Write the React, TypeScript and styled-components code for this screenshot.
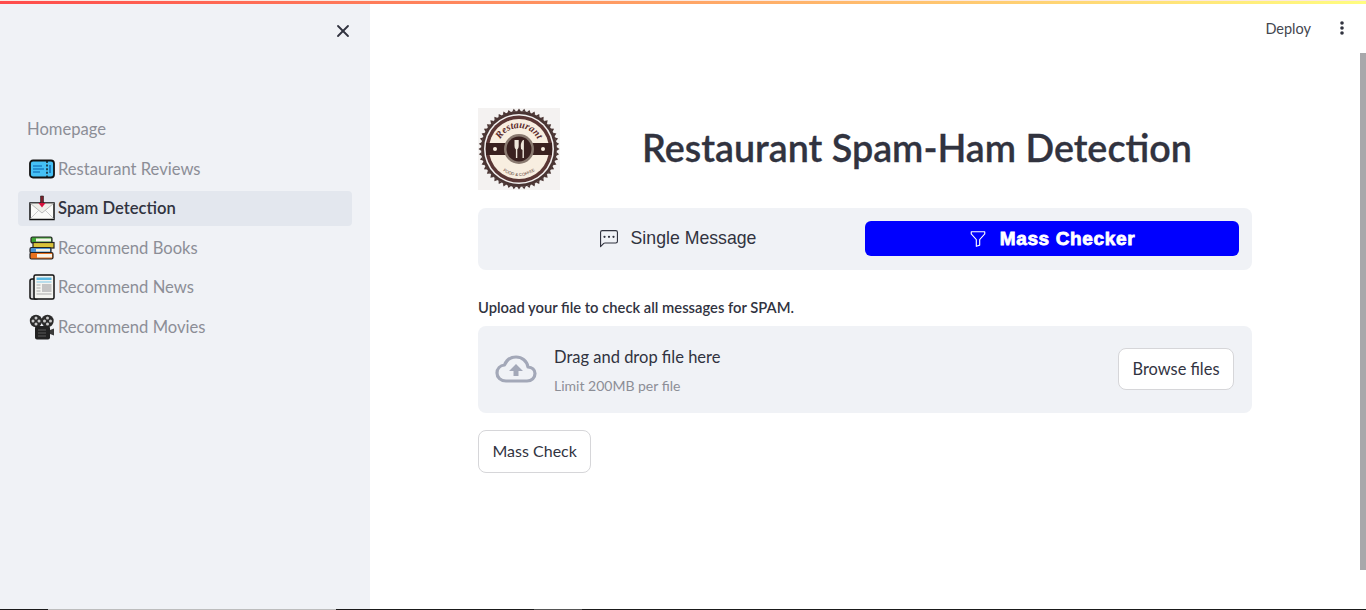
import React from 'react'
import styled, { createGlobalStyle } from 'styled-components'
import { X } from 'lucide-react'
import { BsChatLeftDots, BsFunnel } from 'react-icons/bs'

const sans = `'Lato', 'Noto Sans', sans-serif`

const GlobalStyle = createGlobalStyle`
  html, body {
    margin: 0;
    padding: 0;
    height: 100%;
    overflow: hidden;
    background: #fff;
  }
  * { box-sizing: border-box; }
`

const Page = styled.div`
  width: 1366px;
  height: 610px;
  display: flex;
  flex-direction: column;
  font-family: ${sans};
  color: #31333f;
  overflow: hidden;
`

const Decoration = styled.div`
  height: 4px;
  flex: none;
  border-top: 1px solid #fbe9e2;
  background: linear-gradient(90deg, rgb(255, 75, 75), rgb(255, 253, 128));
`

const Body = styled.div`
  flex: 1;
  min-height: 0;
  display: flex;
`

const Sidebar = styled.aside`
  width: 370px;
  flex: none;
  background: #f0f2f6;
  padding: 0 18px;
`

const CloseRow = styled.div`
  height: 54px;
  display: flex;
  align-items: center;
  justify-content: flex-end;
  margin-right: -1px;
  color: #31333f;
`

const Nav = styled.nav`
  margin-top: 53.5px;
  display: flex;
  flex-direction: column;
  gap: 4.5px;
`

const NavItem = styled.div<{ $active?: boolean; $plain?: boolean }>`
  height: 35px;
  display: flex;
  align-items: center;
  gap: 3px;
  border-radius: 4px;
  padding-left: ${({ $plain }) => ($plain ? '9px' : '11px')};
  font-size: 16.6px;
  font-weight: ${({ $active }) => ($active ? 600 : 400)};
  color: ${({ $active }) => ($active ? '#31333f' : '#8c8e96')};
  background: ${({ $active }) => ($active ? '#e3e7ee' : 'transparent')};
`

const Main = styled.main`
  flex: 1;
  min-width: 0;
  display: flex;
  flex-direction: column;
`

const Header = styled.header`
  height: 48px;
  flex: none;
  display: flex;
  align-items: center;
  justify-content: flex-end;
  gap: 28px;
  padding-right: 15px;
  font-size: 14.5px;
  color: #44464f;
`

const Content = styled.div`
  width: 774px;
  margin-left: 108px;
  padding-top: 56px;
`

const TitleRow = styled.div`
  display: flex;
  align-items: center;
`

const LogoBox = styled.div`
  width: 104px;
  flex: none;
  display: flex;
`

const Title = styled.h1`
  flex: 1;
  margin: 0 0 2px;
  text-align: center;
  font-size: 37.7px;
  line-height: 80px;
  font-weight: 600;
  color: #31333f;
  -webkit-text-stroke: 0.3px #31333f;
`

const TabBar = styled.div`
  margin-top: 18px;
  height: 62px;
  display: grid;
  grid-template-columns: 1fr 1fr;
  align-items: center;
  padding: 0 13px 1px;
  border-radius: 8px;
  background: #f0f2f6;
`

const Tab = styled.div<{ $active?: boolean }>`
  height: 35px;
  display: flex;
  align-items: center;
  justify-content: center;
  gap: 13px;
  border-radius: 6px;
  font-family: 'Liberation Sans', Arial, sans-serif;
  font-size: ${({ $active }) => ($active ? '19px' : '17.7px')};
  font-weight: ${({ $active }) => ($active ? 700 : 400)};
  letter-spacing: ${({ $active }) => ($active ? '0.65px' : '0')};
  -webkit-text-stroke: ${({ $active }) => ($active ? '0.8px #fff' : '0')};
  color: ${({ $active }) => ($active ? '#fff' : '#31333f')};
  background: ${({ $active }) => ($active ? '#0000ff' : 'transparent')};
`

const UploadLabel = styled.div`
  margin-top: 28px;
  font-size: 14.75px;
  line-height: 18px;
  font-weight: 600;
  color: #31333f;
`

const Dropzone = styled.div`
  margin-top: 10px;
  height: 87px;
  display: flex;
  align-items: center;
  gap: 17px;
  padding: 0 18px 2px 17px;
  border-radius: 8px;
  background: #f0f2f6;
`

const DropText = styled.div`
  flex: 1;
  margin-top: 4px;
  display: flex;
  flex-direction: column;
  gap: 10px;
`

const DropTitle = styled.div`
  font-size: 16.5px;
  line-height: 20px;
`

const DropHint = styled.div`
  font-size: 14px;
  line-height: 18px;
  color: #8c8e96;
`

const Button = styled.button`
  height: 42px;
  padding: 0 13.5px;
  background: #fff;
  border: 1px solid #d6d6d9;
  border-radius: 8px;
  font-family: ${sans};
  font-size: 16.4px;
  color: #31333f;
`

const MassButton = styled(Button)`
  display: block;
  margin-top: 17px;
  height: 43px;
  padding-bottom: 2px;
  font-size: 16px;
`

const Scrollbar = styled.div`
  width: 6px;
  flex: none;
  padding-top: 49px;
`

const ScrollThumb = styled.div`
  height: 517px;
  background: #a8a8ab;
`

const BottomLine = styled.div`
  height: 1px;
  flex: none;
  background: linear-gradient(
    90deg,
    #1a1a1a 0 48px,
    #bdbdbd 48px 336px,
    #1a1a1a 336px 534px,
    #555 534px 582px,
    #1a1a1a 582px
  );
`

const TicketIcon = () => (
  <svg width="26" height="20" viewBox="0 0 26 20">
    <rect x="1" y="1.500" width="24" height="17" rx="3" fill="#45c0f5" stroke="#111" strokeWidth="1.800" />
    <path d="M4 7h9M4 10h11M4 13h7" stroke="#1d7fc4" strokeWidth="1.300" />
    <path d="M18 2v16" stroke="#111" strokeWidth="1.400" strokeDasharray="2 1.600" />
    <path d="M21 6v8" stroke="#1d7fc4" strokeWidth="2" />
  </svg>
)

const InboxIcon = () => (
  <svg width="26" height="26" viewBox="0 0 26 26">
    <rect x="1" y="8" width="24" height="16.500" fill="#fbfbf8" stroke="#111" strokeWidth="1.500" />
    <path d="M1.500 23.500 10 15M24.500 23.500 16 15" stroke="#ccc" strokeWidth="1" />
    <path d="M1.500 8.500 13 18l11.500-9.500" fill="#eeeee8" stroke="#bbb" strokeWidth="1" />
    <path d="M11.500 1h3v7h-3z" fill="#7a1f2b" stroke="#222" strokeWidth="0.600" />
    <path d="M9.500 8h7L13 12.500z" fill="#d8113c" />
  </svg>
)

const BooksIcon = () => (
  <svg width="26" height="24" viewBox="0 0 26 24">
    <rect x="2" y="1" width="21" height="6" rx="1.500" fill="#3fa535" stroke="#222" strokeWidth="1.200" />
    <rect x="7" y="2.500" width="15" height="3" fill="#f4f2e6" />
    <rect x="4" y="6.500" width="21" height="5.500" fill="#d9c23a" stroke="#222" strokeWidth="1.200" />
    <rect x="1" y="11.500" width="21" height="5.500" rx="1.500" fill="#4b92d4" stroke="#222" strokeWidth="1.200" />
    <rect x="7" y="13" width="14" height="2.500" fill="#f4f2e6" />
    <rect x="1" y="16.500" width="23" height="6.500" rx="1.500" fill="#e8711e" stroke="#222" strokeWidth="1.200" />
    <rect x="8" y="18" width="15" height="3.500" fill="#f8f5ea" />
  </svg>
)

const NewsIcon = () => (
  <svg width="26" height="26" viewBox="0 0 26 26">
    <rect x="1" y="5" width="8" height="20" rx="2" fill="#d8d8d8" stroke="#111" strokeWidth="1.500" />
    <rect x="5" y="1" width="20" height="24" rx="1.500" fill="#f4f4f0" stroke="#111" strokeWidth="1.500" />
    <rect x="7.500" y="3.500" width="15" height="2.500" fill="#58b7e0" />
    <path d="M7.500 8h15" stroke="#7fc6e6" strokeWidth="1" />
    <rect x="13" y="10" width="9.500" height="8" fill="#c4c4c4" />
    <path d="M7.500 11h4M7.500 14h4M7.500 17h4M7.500 20h15" stroke="#aaa" strokeWidth="1" />
  </svg>
)

const ProjectorIcon = () => (
  <svg width="26" height="26" viewBox="0 0 26 26">
    <circle cx="7" cy="7" r="6.200" fill="#2b2b2b" />
    <circle cx="18.500" cy="7" r="6.200" fill="#2b2b2b" />
    <g fill="#c9c9c9">
      <circle cx="7" cy="4" r="1.500" />
      <circle cx="7" cy="10" r="1.500" />
      <circle cx="4" cy="7" r="1.500" />
      <circle cx="10" cy="7" r="1.500" />
      <circle cx="18.500" cy="4" r="1.500" />
      <circle cx="18.500" cy="10" r="1.500" />
      <circle cx="15.500" cy="7" r="1.500" />
      <circle cx="21.500" cy="7" r="1.500" />
    </g>
    <rect x="6" y="12" width="15" height="13.500" rx="2" fill="#222" />
    <path d="M9 16h8M9 19h8M9 22h8" stroke="#5a5a5a" strokeWidth="1.200" />
    <path d="M21 16l4-1.500v7L21 20z" fill="#3a3a3a" />
  </svg>
)

const RestaurantLogo = () => {
  const teeth = Array.from({ length: 48 }, (_, i) => i * 7.5)
  return (
    <svg width="82" height="82" viewBox="0 0 82 82">
      <rect width="82" height="82" fill="#f4f2f1" />
      <g fill="#4a3533">
        {teeth.map((deg) => (
          <path key={deg} d="M39 3.500 41 0.500 43 3.500z" transform={`rotate(${deg} 41 41)`} />
        ))}
      </g>
      <circle cx="41" cy="41" r="38" fill="#4a3533" />
      <circle cx="41" cy="41" r="35" fill="#f4f2f1" />
      <circle cx="41" cy="41" r="33.500" fill="#5a3634" />
      <circle cx="41" cy="41" r="30" fill="#f8eee0" />
      <rect x="8" y="35" width="66" height="12" fill="#3a211f" />
      <circle cx="17" cy="41" r="2" fill="#f8eee0" />
      <circle cx="65" cy="41" r="2" fill="#f8eee0" />
      <circle cx="41" cy="41" r="15" fill="#8a7a70" />
      <circle cx="41" cy="41" r="12.500" fill="#3a211f" />
      <path d="M36.500 32v6q0 3 1.400 3.500V50h1.400V41.500q1.400-.5 1.400-3.500v-6" fill="#efe6da" />
      <path d="M45 32q-3 3-2 9l1.500 1v8h1.400V32z" fill="#efe6da" />
      <defs>
        <path id="logoArcTop" d="M20 41 A21 21 0 0 1 62 41" />
        <path id="logoArcBottom" d="M17.600 54.500 A27 27 0 0 0 64.400 54.500" />
      </defs>
      <text fontFamily="'Liberation Serif', serif" fontStyle="italic" fontWeight="700" fontSize="10" fill="#5a2a2a">
        <textPath href="#logoArcTop" startOffset="50%" textAnchor="middle">Restaurant</textPath>
      </text>
      <text fontFamily="'Liberation Sans', sans-serif" fontSize="4.200" fill="#5a3a30">
        <textPath href="#logoArcBottom" startOffset="50%" textAnchor="middle">FOOD &amp; COFFEE</textPath>
      </text>
    </svg>
  )
}

const CloudUpload = () => (
  <svg width="42" height="28" viewBox="0 0 42 28" fill="none">
    <path
      d="M11 26C5.500 26 2 22.500 2 18c0-4.300 3.200-7.600 7.500-8C11.500 5 16 2 21 2c6 0 11 4 12 10 4 .3 7 2.800 7 6.500 0 4.200-3.300 7.500-8 7.500z"
      stroke="#a3a8b8"
      strokeWidth="3.200"
      strokeLinejoin="round"
    />
    <path d="M21 9l7 7h-4.500v5h-5v-5H14z" fill="#a3a8b8" />
  </svg>
)

const Kebab = () => (
  <svg width="6" height="14" viewBox="0 0 6 14">
    <circle cx="3" cy="2" r="1.800" fill="#31333f" />
    <circle cx="3" cy="7" r="1.800" fill="#31333f" />
    <circle cx="3" cy="12" r="1.800" fill="#31333f" />
  </svg>
)

const navItems = [
  { label: 'Restaurant Reviews', icon: <TicketIcon /> },
  { label: 'Spam Detection', icon: <InboxIcon />, active: true },
  { label: 'Recommend Books', icon: <BooksIcon /> },
  { label: 'Recommend News', icon: <NewsIcon /> },
  { label: 'Recommend Movies', icon: <ProjectorIcon /> },
]

const App = () => (
  <Page>
    <GlobalStyle />
    <Decoration />
    <Body>
      <Sidebar>
        <CloseRow>
          <X size={20} strokeWidth={2.2} />
        </CloseRow>
        <Nav>
          <NavItem $plain>Homepage</NavItem>
          {navItems.map((item) => (
            <NavItem key={item.label} $active={item.active}>
              {item.icon}
              {item.label}
            </NavItem>
          ))}
        </Nav>
      </Sidebar>
      <Main>
        <Header>
          <span>Deploy</span>
          <Kebab />
        </Header>
        <Content>
          <TitleRow>
            <LogoBox>
              <RestaurantLogo />
            </LogoBox>
            <Title>Restaurant Spam-Ham Detection</Title>
          </TitleRow>
          <TabBar>
            <Tab>
              <BsChatLeftDots size={18} />
              Single Message
            </Tab>
            <Tab $active>
              <BsFunnel size={18} />
              Mass Checker
            </Tab>
          </TabBar>
          <UploadLabel>Upload your file to check all messages for SPAM.</UploadLabel>
          <Dropzone>
            <CloudUpload />
            <DropText>
              <DropTitle>Drag and drop file here</DropTitle>
              <DropHint>Limit 200MB per file</DropHint>
            </DropText>
            <Button>Browse files</Button>
          </Dropzone>
          <MassButton>Mass Check</MassButton>
        </Content>
      </Main>
      <Scrollbar>
        <ScrollThumb />
      </Scrollbar>
    </Body>
    <BottomLine />
  </Page>
)

export default App
